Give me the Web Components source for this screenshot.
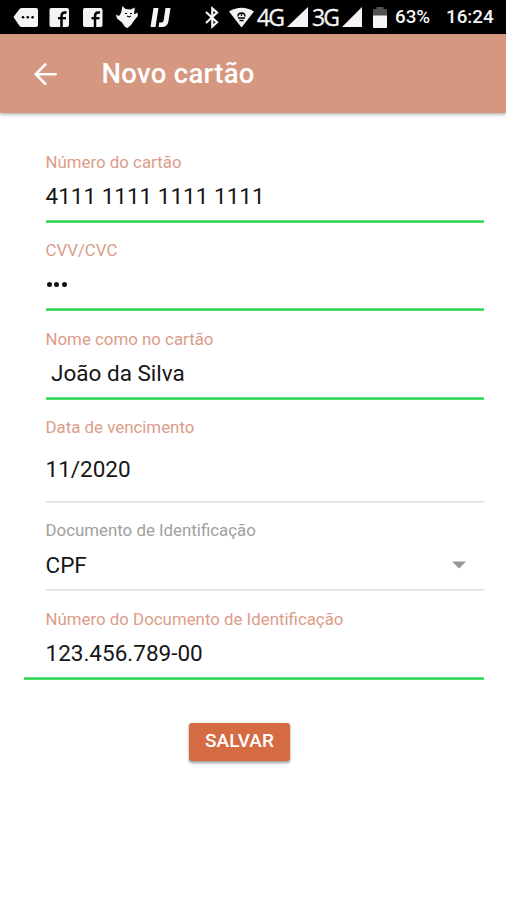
<!DOCTYPE html>
<html lang="pt-BR">
<head>
<meta charset="utf-8">
<title>Novo cartão</title>
<style>
html,body{margin:0;padding:0;background:#fff}
body{font-family:Roboto,"Noto Sans",sans-serif;color:#161616}
</style>
</head>
<body>
<card-page></card-page>
<script>
const define = (name, html) => {
  const t = document.createElement('template');
  t.innerHTML = html;
  customElements.define(name, class extends HTMLElement {
    constructor() {
      super();
      this.attachShadow({mode: 'open'}).appendChild(t.content.cloneNode(true));
    }
  });
};

define('status-bar', `
<style>
:host{display:flex;align-items:center;height:34px;background:#000;color:#f4f4f4;box-sizing:border-box;overflow:hidden}
svg{display:block;flex:none}
span{white-space:nowrap;flex:none;line-height:34px}
.net{font:400 23px/37px "Open Sans","Noto Sans",sans-serif;letter-spacing:-1.8px;width:28px;-webkit-text-stroke:.3px #f4f4f4}
.num{font-weight:500;font-size:18.8px;line-height:36px}
</style>
<svg width="190" height="34" viewBox="0 0 190 34" fill="#f4f4f4">
  <path d="M13.500 17 19.500 9Q20.500 8 22 8H36Q38 8 38 10V25Q38 27 36 27H22Q20.500 27 19.500 26Z"/>
  <g fill="#000"><circle cx="23" cy="17.200" r="1.300"/><circle cx="27.800" cy="17.200" r="1.300"/><circle cx="32.600" cy="17.200" r="1.300"/></g>
  <g><path d="M51 8H67Q69 8 69 10V25Q69 27 67 27H51Q49.500 27 49.500 25V10Q49.500 8 51 8Z"/><path d="M61.500 27V16Q61.500 12.500 65 12.500H66.500" fill="none" stroke="#000" stroke-width="2.500"/><path d="M58 18.200H66" stroke="#000" stroke-width="2.300"/></g>
  <g transform="translate(33.500 0)"><path d="M51 8H67Q69 8 69 10V25Q69 27 67 27H51Q49.500 27 49.500 25V10Q49.500 8 51 8Z"/><path d="M61.500 27V16Q61.500 12.500 65 12.500H66.500" fill="none" stroke="#000" stroke-width="2.500"/><path d="M58 18.200H66" stroke="#000" stroke-width="2.300"/></g>
  <path d="M121 13 122.500 6 125.500 9 130.500 9.500 134.800 7.500 134 14.500 137.500 12.500 137.800 16 134.500 20 131 25 127.500 28 125 27 122 22.500 117 18.500 116 14.500 119 16Z"/>
  <path d="M125 13.500h2M130 13.500h2M127 16l2 1 2-1" stroke="#000" stroke-width="1.100" fill="none"/>
  <path d="M153.500 8H158.500L155.500 27H150.500ZM165.500 8H170.500L168.500 21Q167.500 27 162 27H158.500L159.200 22.500H161.500Q163.300 22.500 163.700 20Z"/>
</svg>
<svg width="67" height="34" viewBox="190 0 67 34" fill="#f4f4f4">
  <path d="M206 12 217 22.300 212.300 26.500V8.500L217 12.500 206 23" fill="none" stroke="#f4f4f4" stroke-width="2.200"/>
  <path d="M229 11.500Q241.500 4 254 11.500L241.500 27.500Z"/>
  <path d="M238 16.500Q238 13 241.500 13T245 16.500M238 18H245M239.500 20.500H243.500M241.500 12.500V16" stroke="#000" stroke-width="1.400" fill="none"/>
</svg>
<span class="net">4G</span>
<svg width="27" height="34" viewBox="285 0 27 34"><path d="M287 27H308V7Z" fill="#f4f4f4"/></svg>
<span class="net">3G</span>
<svg width="27" height="34" viewBox="340 0 27 34"><path d="M342 27H362V7Z" fill="#f4f4f4"/></svg>
<svg width="28" height="34" viewBox="367 0 28 34"><path d="M373 16V9H376.500V7H383.500V9H387V16Z" fill="#505050"/><path d="M373 15.500H387V27Q387 28 386 28H374Q373 28 373 27Z" fill="#f4f4f4"/></svg>
<span class="num" style="width:51px"><slot name="battery"></slot></span>
<span class="num"><slot name="time"></slot></span>
`);

define('app-bar', `
<style>
:host{display:flex;align-items:center;height:79px;background:#d59780;box-sizing:border-box;padding-left:31px;
  box-shadow:0 1px 4px rgba(0,0,0,.4);color:#fff;position:relative}
svg{display:block;flex:none;margin-right:42.500px}
h1{margin:0;font-size:27.500px;letter-spacing:.3px;font-weight:500;line-height:34px;padding-top:1px;white-space:nowrap}
</style>
<svg width="28" height="28" viewBox="0 0 28 28" fill="none" stroke="#fff" stroke-width="2.600"><path d="M25.700 14.200H5M15 3.700 4.800 14.200 15 24.700"/></svg>
<h1><slot></slot></h1>
`);

define('form-field', `
<style>
:host{display:flex;flex-direction:column;box-sizing:border-box;height:88.500px;padding-top:17.500px;color:#161616;
  margin-left:45.500px}
:host([tall]){height:103px}
:host([wide]){margin-left:23.500px}
.label{font-size:16.850px;line-height:20px;color:#dc9c88;white-space:nowrap}
:host([muted]) .label{color:#a0a0a0}
.row{display:flex;align-items:center;justify-content:space-between;margin-top:11.500px;height:26px;
  font-size:22.500px;line-height:26px;white-space:pre;padding-right:18px}
:host([tall]) .row{margin-top:18.500px}
:host([wide]) :is(.label,.row){margin-left:22px}
svg{display:block;width:100%;height:3px;margin-top:auto}
rect{fill:#2ad64f}
:host([idle]) rect{fill:#dedede;height:1.500px;y:1px}
</style>
<div class="label"><slot name="label"></slot></div>
<div class="row"><span><slot></slot></span><slot name="end"></slot></div>
<svg><rect width="100%" height="2.500" y=".300"/></svg>
`);

define('drop-arrow', `
<style>:host{display:block;white-space:normal}svg{display:block}</style>
<svg width="14" height="8" viewBox="0 0 14 8"><path d="M0 .500H14L7 7.500Z" fill="#979797"/></svg>
`);

define('secret-dots', `
<style>:host{display:flex;gap:2.900px;padding-left:1px;white-space:normal}i{width:5px;height:5px;border-radius:50%;background:#111}</style>
<i></i><i></i><i></i>
`);

define('raised-button', `
<style>
:host{display:block}
button{display:block;width:101px;height:38px;border:0;border-radius:3px;background:#d56b43;color:#fff;padding:0;
  font:500 19px/36px Roboto,sans-serif;box-shadow:0 1.500px 3px rgba(0,0,0,.4)}
span{display:block;margin-top:-2px}
</style>
<button><span><slot></slot></span></button>
`);

define('card-page', `
<style>
:host{display:flex;flex-direction:column;height:900px;width:506px;background:#fff;overflow:hidden}
form{display:flex;flex-direction:column;padding:21px 22px 0 0}
raised-button{margin:43.500px 0 0 189px}
</style>
<status-bar><span slot="battery">63%</span><span slot="time">16:24</span></status-bar>
<app-bar>Novo cartão</app-bar>
<form>
  <form-field><span slot="label">Número do cartão</span>4111 1111 1111 1111</form-field>
  <form-field><span slot="label">CVV/CVC</span><secret-dots></secret-dots></form-field>
  <form-field><span slot="label">Nome como no cartão</span> João da Silva</form-field>
  <form-field idle tall><span slot="label">Data de vencimento</span>11/2020</form-field>
  <form-field idle muted><span slot="label">Documento de Identificação</span>CPF<drop-arrow slot="end"></drop-arrow></form-field>
  <form-field wide><span slot="label">Número do Documento de Identificação</span>123.456.789-00</form-field>
  <raised-button>SALVAR</raised-button>
</form>
`);
</script>
</body>
</html>
